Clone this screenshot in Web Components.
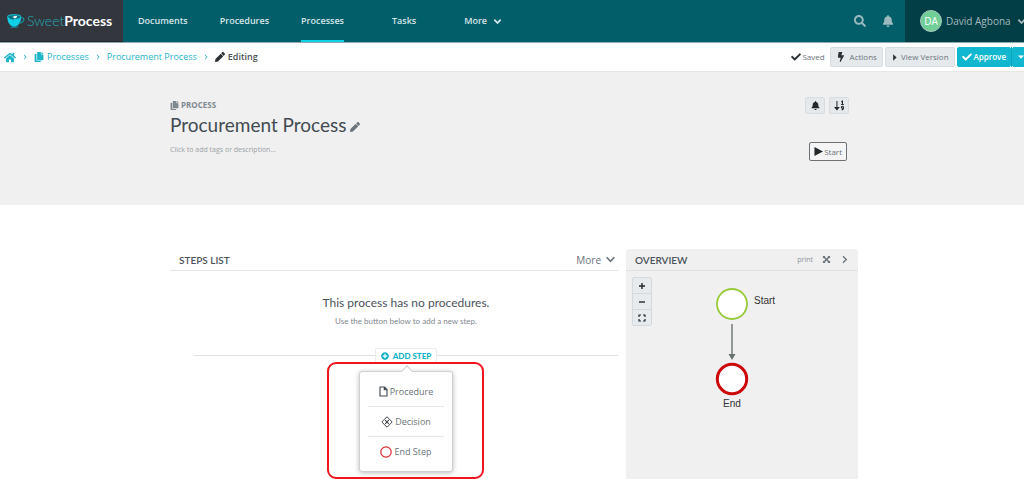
<!DOCTYPE html>
<html lang="en">
<head>
<meta charset="utf-8">
<meta name="viewport" content="width=device-width, initial-scale=1">
<title>Procurement Process - SweetProcess</title>
<style>
  html, body { margin: 0; height: 100%; }
  body { font: 10px/16px "Open Sans", "Noto Sans", sans-serif; color: #6b747b; background: #fff; overflow: hidden; }
</style>
</head>
<body>
<sp-app></sp-app>

<script>
const ICONS = {
  search: ['0 0 512 512', '<path d="M505 442.7L405.3 343c-4.5-4.5-10.6-7-17-7H372c27.6-35.3 44-79.7 44-128C416 93.1 322.9 0 208 0S0 93.1 0 208s93.1 208 208 208c48.3 0 92.7-16.4 128-44v16.3c0 6.4 2.5 12.5 7 17l99.7 99.7c9.4 9.4 24.6 9.4 33.9 0l28.3-28.3c9.4-9.4 9.4-24.6.1-34zM208 336c-70.7 0-128-57.2-128-128 0-70.7 57.2-128 128-128 70.7 0 128 57.2 128 128 0 70.7-57.2 128-128 128z"/>'],
  bell: ['0 0 448 512', '<path d="M224 512c35.32 0 63.97-28.65 63.97-64H160.03c0 35.35 28.65 64 63.97 64zm215.39-149.71c-19.32-20.76-55.47-51.99-55.47-154.29 0-77.7-54.48-139.9-127.94-155.16V32c0-17.67-14.32-32-31.98-32s-31.98 14.33-31.98 32v20.84C118.56 68.1 64.08 130.3 64.08 208c0 102.3-36.15 133.53-55.47 154.29-6 6.45-8.66 14.16-8.61 21.71.11 16.4 12.98 32 32.1 32h383.8c19.12 0 32-15.6 32.1-32 .05-7.55-2.61-15.27-8.61-21.71z"/>'],
  home: ['0 0 576 512', '<path d="M280.37 148.26L96 300.11V464a16 16 0 0 0 16 16l112.06-.29a16 16 0 0 0 15.92-16V368a16 16 0 0 1 16-16h64a16 16 0 0 1 16 16v95.64a16 16 0 0 0 16 16.05L464 480a16 16 0 0 0 16-16V300L295.67 148.26a12.19 12.19 0 0 0-15.3 0zM571.6 251.47L488 182.56V44.05a12 12 0 0 0-12-12h-56a12 12 0 0 0-12 12v72.61L318.47 43a48 48 0 0 0-61 0L4.34 251.47a12 12 0 0 0-1.6 16.9l25.5 31A12 12 0 0 0 45.15 301l235.22-193.74a12.19 12.19 0 0 1 15.3 0L530.9 301a12 12 0 0 0 16.9-1.6l25.5-31a12 12 0 0 0-1.7-16.93z"/>'],
  copy: ['0 0 448 512', '<path d="M320 448v40c0 13.255-10.745 24-24 24H24c-13.255 0-24-10.745-24-24V120c0-13.255 10.745-24 24-24h72v296c0 30.879 25.121 56 56 56h168zm0-344V0H152c-13.255 0-24 10.745-24 24v368c0 13.255 10.745 24 24 24h272c13.255 0 24-10.745 24-24V128H344c-13.2 0-24-10.8-24-24zm120.971-31.029L375.029 7.029A24 24 0 0 0 358.059 0H352v96h96v-6.059a24 24 0 0 0-7.029-16.97z"/>'],
  pencil: ['0 0 512 512', '<path d="M497.9 142.1l-46.1 46.1c-4.7 4.7-12.3 4.7-17 0l-111-111c-4.7-4.7-4.7-12.3 0-17l46.1-46.1c18.7-18.7 49.1-18.7 67.9 0l60.1 60.1c18.8 18.7 18.8 49.1 0 67.9zM284.2 99.8L21.6 362.4.4 483.9c-2.9 16.4 11.4 30.6 27.8 27.8l121.5-21.3 262.6-262.6c4.7-4.7 4.7-12.3 0-17l-111-111c-4.8-4.7-12.4-4.7-17.1 0z"/>'],
  check: ['0 0 512 512', '<path d="M173.898 439.404l-166.4-166.4c-9.997-9.997-9.997-26.206 0-36.204l36.203-36.204c9.997-9.998 26.207-9.998 36.204 0L192 312.69 432.095 72.596c9.997-9.997 26.207-9.997 36.204 0l36.203 36.204c9.997 9.997 9.997 26.206 0 36.204l-294.4 294.401c-9.998 9.997-26.207 9.997-36.204-.001z"/>'],
  bolt: ['0 0 320 512', '<path d="M296 160H180.6l42.6-129.8C227.2 15 215.7 0 200 0H56C44 0 33.8 8.9 32.2 20.8l-32 240C-1.7 275.2 9.5 288 24 288h118.7L96.6 482.5c-3.6 15.2 8 29.5 23.3 29.5 8.4 0 16.4-4.4 20.8-12l176-304c9.3-15.9-2.2-36-20.7-36z"/>'],
  'plus-circle': ['0 0 512 512', '<path d="M256 8C119 8 8 119 8 256s111 248 248 248 248-111 248-248S393 8 256 8zm144 276c0 6.6-5.4 12-12 12h-92v92c0 6.6-5.4 12-12 12h-56c-6.6 0-12-5.4-12-12v-92h-92c-6.6 0-12-5.4-12-12v-56c0-6.6 5.4-12 12-12h92v-92c0-6.6 5.4-12 12-12h56c6.6 0 12 5.4 12 12v92h92c6.6 0 12 5.4 12 12v56z"/>'],
  'chev-down': ['0 0 10 10', '<path d="M1.5 3L5 6.7 8.500 3" fill="none" stroke="currentColor" stroke-width="var(--sw,1.7)"/>'],
  'chev-right': ['0 0 10 10', '<path d="M3.3 1.5L7 5 3.3 8.500" fill="none" stroke="currentColor" stroke-width="var(--sw,1.7)"/>'],
  'caret-right': ['0 0 10 10', '<path d="M3 .5L8 5 3 9.500z"/>'],
  'caret-down': ['0 0 10 10', '<path d="M0 2.5h10L5 7.8z"/>'],
  play: ['0 0 10 10', '<path d="M.5 0L10 5 .5 10z"/>'],
  sort: ['0 0 12 12', '<path d="M3.2 1v8M1.3 8.300L3.2 10.500 5.1 8.300z" stroke="currentColor" stroke-width="1.1"/><path d="M8 2.200l1.2-.9v3.500M7.800 4.900h2.900M10.300 7.900a1.100 1.100 0 1 0-2.200 0 1.100 1.100 0 0 0 2.200 0c.2 1.700-.4 2.700-1.900 2.800" fill="none" stroke="currentColor" stroke-width="1.200"/>'],
  plus: ['0 0 8 8', '<path d="M4 1v6M1 4h6" stroke="currentColor" stroke-width="1.4"/>'],
  minus: ['0 0 8 8', '<path d="M1 4h6" stroke="currentColor" stroke-width="1.4"/>'],
  frame: ['0 0 8 8', '<path d="M1 3V1h2M5 1h2v2M7 5v2H5M3 7H1V5" fill="none" stroke="currentColor" stroke-width="1.2"/>'],
  expand: ['0 0 10 10', '<path d="M1 1h3L3.1 1.900 5 3.800 6.900 1.900 6 1h3v3l-.9-.9L6.200 5l1.900 1.900L9 6v3H6l.9-.9L5 6.200 3.100 8.100 4 9H1V6l.9.9L3.800 5 1.900 3.100 1 4z"/>'],
  file: ['0 0 9 11', '<path d="M1 1h4.500L8 3.500V10H1zM5.300 1v2.800H8" fill="none" stroke="currentColor" stroke-width="1.1"/>'],
  decision: ['0 0 12 12', '<path d="M6 .8L11.2 6 6 11.2.8 6z" fill="none" stroke="currentColor" stroke-width="1"/><path d="M4.200 4.200l3.600 3.600M7.800 4.200L4.200 7.800" stroke="currentColor" stroke-width="1.1"/>'],
  ring: ['0 0 12 12', '<circle cx="6" cy="6" r="5.200" fill="none" stroke="#d9262e" stroke-width="1.200"/>'],
  cup: ['0 0 18 14', '<path d="M.3 2.600C.3 1 3.500.2 7.200.2s7 .8 7 2.400c0 5-2.400 10.200-7 10.200S.3 7.600.3 2.600z" fill="#0fd0e6"/><path d="M.8 2.600C2 .9 12.500.9 13.700 2.600 12 6 9.500 4.200 7.200 5.200 5 6 2.300 5 .8 2.600z" fill="#0b6f80"/><path d="M5.500 2.700l3.800-.9 1 1.300-2.600 1.300z" fill="#fff"/><path d="M14 3.700c4-.8 4 5-1.700 5.400" fill="none" stroke="#178b9c" stroke-width="1.300"/><path d="M3.500 13.300c2.500.6 5.500.4 8-.5" stroke="#178b9c" fill="none"/>']
};

/* Registers an element whose shadow root is cloned from a template. */
function define(name, css, html) {
  const tpl = document.createElement('template');
  tpl.innerHTML = `<style>*{box-sizing:border-box}a{color:inherit;text-decoration:none}button{font:inherit;color:inherit;margin:0;padding:0;border:0;background:none;cursor:pointer}h1,h2,h3,p{margin:0}${css}</style>${html}`;
  customElements.define(name, class extends HTMLElement {
    constructor() {
      super();
      this.attachShadow({ mode: 'open' }).append(tpl.content.cloneNode(true));
    }
  });
}

customElements.define('sp-icon', class extends HTMLElement {
  connectedCallback() {
    if (this.shadowRoot) return;
    const [box, body] = ICONS[this.getAttribute('name')];
    this.attachShadow({ mode: 'open' }).innerHTML =
      `<style>:host{display:inline-flex;flex:none;width:var(--w,10px);height:var(--h,var(--w,10px))}svg{width:100%;height:100%;display:block}</style>
       <svg viewBox="${box}" fill="currentColor" aria-hidden="true">${body}</svg>`;
  }
});

define('sp-logo', `
  :host{display:flex;flex:none;width:123px;background:#33373d;border-bottom:1px solid #24272b}
  a{display:flex;align-items:center;gap:2px;padding-left:7px;font:300 14px/20px Lato,sans-serif;color:#25a9b9}
  b{font-weight:700;color:#fff}
  sp-icon{--w:18px;--h:14px}
`, `<a href="#"><sp-icon name="cup"></sp-icon><span>Sweet<b>Process</b></span></a>`);

define('sp-nav', `
  :host{display:flex;flex:1}
  nav{display:flex;padding-left:15px;font-size:9px}
  a{display:flex;align-items:center;gap:6px;margin-right:32px;color:#d3e5e8;font-weight:600}
  a[aria-current]{box-shadow:inset 0 -2px #10d3e8}
  .wide{margin-right:48px}.more{margin-right:0}
  sp-icon{--w:9px;--sw:2}
`, `<nav aria-label="Main">
  <a href="#">Documents</a><a href="#">Procedures</a><a class="wide" href="#" aria-current="page">Processes</a>
  <a class="wide" href="#">Tasks</a><a class="more" href="#">More <sp-icon name="chev-down"></sp-icon></a></nav>`);

define('sp-topbar', `
  :host{display:flex;flex:none;height:43px;background:#025e69;border-bottom:1px solid #8fa9b0}
  .tools{display:flex;align-items:center;gap:16px;padding-right:11px;color:#9bb9be}
  .tools button{display:flex}
  sp-icon{--w:12px}
  .user{display:flex;align-items:center;flex:none;gap:4px;width:119px;padding-left:15px;background:#013e46;color:#a5b9bd;overflow:hidden;white-space:nowrap}
  .avatar{display:grid;place-items:center;flex:none;width:22px;height:22px;border-radius:50%;background:#6fcf97;border:1px solid #a9c6bd;color:#fff;line-height:20px}
  .user sp-icon{--w:9px;--sw:2;margin-left:2px}
`, `<sp-logo></sp-logo><sp-nav></sp-nav>
  <div class="tools"><button aria-label="Search"><sp-icon name="search"></sp-icon></button><button aria-label="Notifications"><sp-icon name="bell"></sp-icon></button></div>
  <button class="user"><span class="avatar">DA</span><span>David Agbona</span><sp-icon name="chev-down"></sp-icon></button>`);

define('sp-button', `
  :host{display:inline-flex;flex:none}
  button{display:flex;align-items:center;justify-content:center;gap:var(--gap,4px);height:var(--bh,20px);min-width:var(--bw,0);padding:0 var(--pad,5px);border:1px solid var(--bd,#d9dde0);border-radius:2px;background:var(--bg,#e6e9ec);color:var(--fg,#6b747b);white-space:nowrap}
`, `<button><slot></slot></button>`);

define('sp-crumbs', `
  :host{display:flex;flex:none;align-items:center;height:29px;padding-left:4px;background:#fff;border-bottom:1px solid #e6e6e6;overflow:hidden}
  nav{display:flex;align-items:center;gap:6px;flex:1;font-size:9px;color:#1fb5c9}
  nav a,nav span{display:flex;align-items:center;gap:3px}
  nav span{color:#4a5157;font-weight:600}
  nav>sp-icon{--w:6px;--sw:1.5}
  .home{--w:12px;--h:11px}
  .actions{display:flex;align-items:center;gap:2px;margin-right:-6px;font-size:8px}
  .saved{display:flex;align-items:center;gap:1px;margin-right:3px}
  .dark{color:#2c3135}
  .go{--bg:#10b7cf;--bd:#10b7cf;--fg:#fff;font-weight:600;--gap:2px;--pad:4px}
  .split{display:flex}
  .drop{--pad:5px;border-left:1px solid #0da4ba}
`, `<nav aria-label="Breadcrumb">
    <a href="#" aria-label="Home"><sp-icon class="home" name="home"></sp-icon></a><sp-icon name="chev-right"></sp-icon>
    <a href="#"><sp-icon name="copy"></sp-icon>Processes</a><sp-icon name="chev-right"></sp-icon>
    <a href="#">Procurement Process</a><sp-icon name="chev-right"></sp-icon>
    <span><sp-icon class="dark" name="pencil"></sp-icon>Editing</span></nav>
  <div class="actions"><span class="saved"><sp-icon class="dark" name="check"></sp-icon>Saved</span>
    <sp-button><sp-icon class="dark" name="bolt"></sp-icon>Actions</sp-button>
    <sp-button style="--gap:3px"><sp-icon class="dark" style="--w:7px" name="caret-right"></sp-icon>View Version</sp-button>
    <div class="split"><sp-button class="go"><sp-icon name="check"></sp-icon>Approve</sp-button><sp-button class="go drop" aria-label="More approvals"><sp-icon style="--w:6px" name="caret-down"></sp-icon></sp-button></div></div>`);

define('sp-hero', `
  :host{display:block;flex:none;background:#f0f0f0}
  .wrap{display:flex;justify-content:space-between;box-sizing:content-box;max-width:688px;min-height:108px;margin:0 auto;padding:25px 0 0 4px}
  .kind{display:flex;align-items:center;gap:2px;font-size:8px;line-height:16px;font-weight:700;color:#7f8990}
  .kind sp-icon{--w:9px}
  h1{display:flex;align-items:center;gap:4px;font:400 19px/24px Lato,sans-serif;color:#434b52}
  h1 sp-icon{--w:10px;color:#6b747b;margin-top:4px}
  .tags{display:block;font-size:7px;line-height:12px;margin-top:7px;color:#9ba2a7}
  .side{display:flex;flex-direction:column;align-items:flex-end;gap:28px;padding-right:9px}
  .row{display:flex;gap:4px;--bh:17px;--bw:20px;--pad:2px;--fg:#23282c}
  .start{--bg:#f5f5f5;--bd:#6c7276;--gap:1px;--pad:4px;--bh:19px;font-size:8px;margin-right:2px}
  .start sp-icon{--w:9px;color:#23282c}
`, `<div class="wrap"><div>
      <div class="kind"><sp-icon name="copy"></sp-icon>PROCESS</div>
      <h1>Procurement Process <button aria-label="Rename"><sp-icon name="pencil"></sp-icon></button></h1>
      <button class="tags">Click to add tags or description...</button></div>
    <div class="side"><div class="row"><sp-button><sp-icon style="--w:9px" name="bell"></sp-icon></sp-button><sp-button><sp-icon style="--w:11px" name="sort"></sp-icon></sp-button></div>
      <sp-button class="start"><sp-icon name="play"></sp-icon>Start</sp-button></div></div>`);

define('sp-step-option', `
  :host{display:block}
  button{display:flex;align-items:center;justify-content:center;gap:2px;width:100%;height:29px}
`, `<button role="menuitem"><slot></slot></button>`);

define('sp-add-step', `
  :host{display:flex;align-items:center;position:relative}
  hr{flex:1;height:0;margin:0;border:0;border-top:1px solid #dfe2e3}
  .add{display:flex;align-items:center;gap:4px;height:15px;padding:0 5px;border:1px solid #ececec;border-radius:2px;color:#12b3c8;font:900 8px/12px Lato,sans-serif;white-space:nowrap}
  .add sp-icon{--w:8px}
  .menu{position:absolute;top:23px;left:50%;width:94px;margin-left:-47px;padding:5px 8px;background:#fff;border:1px solid #d0d0d0;border-radius:3px;box-shadow:0 1px 5px #0004;font-size:9px}
  .menu::before{content:"";position:absolute;top:-5px;left:43px;width:7px;height:7px;background:#fff;border:solid #d0d0d0;border-width:1px 0 0 1px;transform:rotate(45deg)}
  sp-step-option+sp-step-option{border-top:1px solid #e6e6e6}
  .mark{position:absolute;top:14px;left:50%;width:157px;height:117px;margin-left:-79px;border:2px solid #f0141e;border-radius:9px;pointer-events:none}
  .menu sp-icon{--w:12px;color:#3f464c}
`, `<hr><button class="add" aria-haspopup="menu" aria-expanded="true"><sp-icon name="plus-circle"></sp-icon>ADD STEP</button><hr>
  <div class="mark"></div>
  <div class="menu" role="menu">
    <sp-step-option><sp-icon style="--w:9px;--h:11px" name="file"></sp-icon>Procedure</sp-step-option>
    <sp-step-option><sp-icon name="decision"></sp-icon>Decision</sp-step-option>
    <sp-step-option><sp-icon name="ring"></sp-icon>End Step</sp-step-option></div>`);

define('sp-steps', `
  :host{display:block;min-width:0}
  header{display:flex;justify-content:space-between;align-items:center;height:22px;padding:0 2px 0 9px;border-bottom:1px solid #e2e4e5}
  h2{font:600 10px/20px Lato,sans-serif;color:#4c545b}
  header button{display:flex;align-items:center;gap:4px}
  header sp-icon{--w:11px;--sw:1.5}
  .empty{margin-left:24px;padding-top:22px;text-align:center}
  h3{font:400 12px/20px Lato,sans-serif;color:#4c545b}
  p{font:400 8px/16px Lato,sans-serif;color:#7f8990}
  sp-add-step{margin:19px 0 0 24px}
`, `<header><h2>STEPS LIST</h2><button>More <sp-icon name="chev-down"></sp-icon></button></header>
  <div class="empty"><h3>This process has no procedures.</h3><p>Use the button below to add a new step.</p></div>
  <sp-add-step></sp-add-step>`);

define('sp-overview', `
  :host{display:flex;flex-direction:column;background:#f0f0f0;border-radius:3px 3px 0 0}
  header{display:flex;align-items:center;gap:9px;height:22px;padding:0 9px;border-bottom:1px solid #dfe2e4}
  h2{flex:1;font:600 10px/20px Lato,sans-serif;color:#4c545b}
  header a{font-size:7px;color:#8a9298}
  header button{display:flex}
  header sp-icon{--w:9px;--sw:1.5}
  .canvas{flex:1;display:flex;align-items:flex-start;padding:6px}
  .zoom{display:flex;flex-direction:column;flex:none;border:1px solid #d3dade;border-radius:2px;background:#e7ebee;color:#23282c}
  .zoom button{display:grid;place-items:center;width:18px;height:15px}
  .zoom button+button{height:16px;border-top:1px solid #d3dade}
  .zoom sp-icon{--w:8px}
  svg{flex:none;width:120px;height:150px;margin-left:44px;font:10px "Liberation Sans",Arial,sans-serif}
`, `<header><h2>OVERVIEW</h2><a href="#">print</a><button aria-label="Full screen"><sp-icon name="expand"></sp-icon></button><button aria-label="Collapse"><sp-icon name="chev-right"></sp-icon></button></header>
  <div class="canvas"><div class="zoom"><button aria-label="Zoom in"><sp-icon name="plus"></sp-icon></button><button aria-label="Zoom out"><sp-icon name="minus"></sp-icon></button><button aria-label="Fit"><sp-icon name="frame"></sp-icon></button></div>
  <svg viewBox="0 0 120 150" role="img" aria-label="Flow from Start to End">
    <circle cx="36" cy="27" r="15" fill="#fff" stroke="#97c93d" stroke-width="1.8"/>
    <path d="M36 47v31" stroke="#68726f" stroke-width="1.4"/><path d="M32.500 77h7L36 83z" fill="#68726f"/>
    <circle cx="36" cy="102" r="14.700" fill="#fff" stroke="#cc0a0a" stroke-width="3"/>
    <text x="58" y="27" fill="#333">Start</text><text x="36" y="130" fill="#333" text-anchor="middle">End</text>
  </svg></div>`);

define('sp-app', `
  :host{display:flex;flex-direction:column;min-height:100vh}
  main{flex:1;display:grid;grid-template-columns:minmax(0,448px) minmax(0,232px);column-gap:8px;box-sizing:content-box;width:100%;max-width:688px;margin:0 auto;padding:44px 0 0 4px}
`, `<sp-topbar></sp-topbar><sp-crumbs></sp-crumbs><sp-hero></sp-hero>
  <main><sp-steps></sp-steps><sp-overview></sp-overview></main>`);
</script>
</body>
</html>
